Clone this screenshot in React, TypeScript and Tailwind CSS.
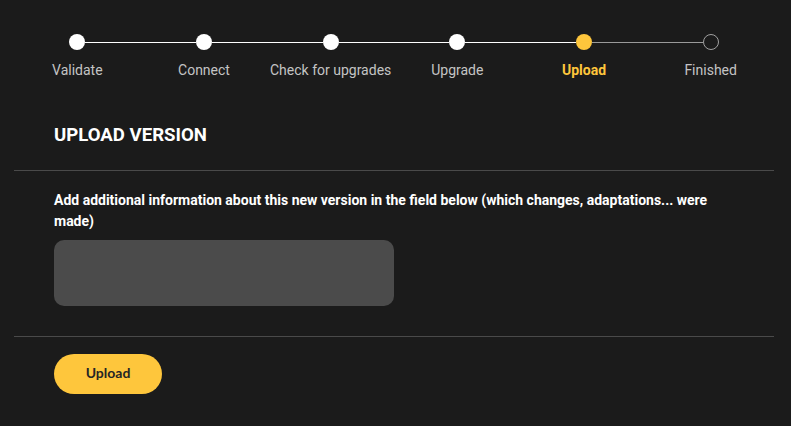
import { FunctionComponent } from "react";

const steps = ["Validate", "Connect", "Check for upgrades", "Upgrade", "Upload", "Finished"];
const activeStep = 4;

const Stepper: FunctionComponent = () => {
  return (
    <div className="grid grid-cols-6 pt-[34px]">
      {steps.map((label, index) => {
        const done = index < activeStep;
        const active = index === activeStep;
        return (
          <div key={label} className="flex flex-col items-center">
            <div className="flex items-center w-full h-4">
              <div
                className={
                  index === 0
                    ? "flex-1 h-px"
                    : index <= activeStep
                    ? "flex-1 h-px bg-white"
                    : "flex-1 h-px bg-[#9a9a9a]"
                }
              />
              {done && <div className="w-4 h-4 rounded-full bg-white" />}
              {active && <div className="w-4 h-4 rounded-full bg-[#fec63c]" />}
              {!done && !active && (
                <div className="w-4 h-4 rounded-full border-[1.5px] border-[#a0a0a0]" />
              )}
              <div
                className={
                  index === steps.length - 1
                    ? "flex-1 h-px"
                    : index < activeStep
                    ? "flex-1 h-px bg-white"
                    : "flex-1 h-px bg-[#9a9a9a]"
                }
              />
            </div>
            <span
              className={
                active
                  ? "mt-[10px] text-[14px] leading-5 font-bold text-[#fec63c]"
                  : "mt-[10px] text-[14px] leading-5 text-[#c4c4c4]"
              }
            >
              {label}
            </span>
          </div>
        );
      })}
    </div>
  );
};

export default function App() {
  return (
    <div className="min-h-screen bg-[#1b1b1b] pl-[14px] pr-[17px] font-['Roboto',sans-serif]">
      <Stepper />

      <div className="px-10 mt-[41px] pb-[21px]">
        <h2 className="text-[18.6px] leading-7 font-bold text-white">UPLOAD VERSION</h2>
      </div>
      <div className="border-t border-[#4a4a4a]" />

      <div className="px-10 pt-[19px] pb-[30px]">
        <p className="text-[14px] leading-[21px] font-bold text-white">
          Add additional information about this new version in the field below (which changes,
          adaptations... were made)
        </p>
        <textarea className="block mt-2 w-[340px] h-[66px] rounded-[10px] bg-[#4b4b4b] resize-none outline-none text-white text-sm p-3" />
      </div>
      <div className="border-t border-[#4a4a4a]" />

      <div className="px-10 pt-[17px] pb-8">
        <button
          type="button"
          className="w-[108px] h-10 pb-1 rounded-full bg-[#fec63c] text-[#252525] text-[14px] font-bold font-['Lato',sans-serif] cursor-pointer"
        >
          Upload
        </button>
      </div>
    </div>
  );
}
